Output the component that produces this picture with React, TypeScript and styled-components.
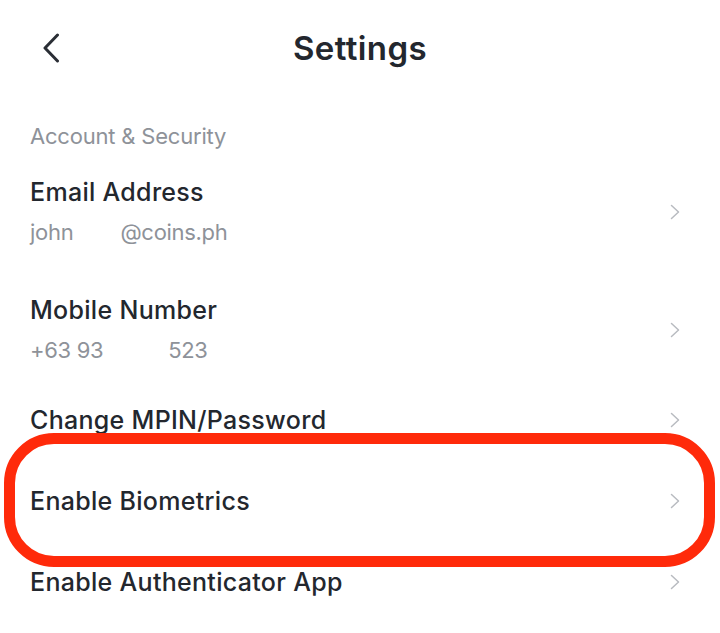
import React from 'react'
import styled, { createGlobalStyle } from 'styled-components'

const GlobalStyle = createGlobalStyle`
  html, body {
    margin: 0;
    padding: 0;
    background: #ffffff;
  }
  body {
    font-family: Inter, 'Noto Sans', sans-serif;
    color: #23272e;
    -webkit-font-smoothing: antialiased;
  }
`

const Page = styled.div`
  width: 720px;
  min-height: 633px;
  background: #fff;
  overflow: hidden;
`

const Header = styled.header`
  display: grid;
  grid-template-columns: 100px 1fr 100px;
  align-items: center;
  height: 96px;
`

const BackButton = styled.button`
  display: flex;
  align-items: center;
  justify-content: flex-start;
  padding: 0 0 0 42px;
  margin: 0;
  border: 0;
  background: none;
  height: 100%;
  cursor: pointer;
`

const Title = styled.h1`
  margin: 0;
  text-align: center;
  font-size: 33px;
  font-weight: 600;
  letter-spacing: 0.4px;
  color: #23272e;
`

const SectionLabel = styled.div`
  margin-top: 25px;
  padding-left: 30px;
  font-size: 22px;
  line-height: 30px;
  color: #8e9299;
  letter-spacing: -0.2px;
`

const List = styled.div`
  display: flex;
  flex-direction: column;
  margin-top: 3px;
`

// rows with a fixed height are single-line; others size to their two lines
const Row = styled.div<{ $height?: number }>`
  position: relative;
  display: flex;
  align-items: center;
  justify-content: space-between;
  padding: ${p => (p.$height ? '0 40px 0 30px' : '22px 40px 25px 30px')};
  height: ${p => (p.$height ? `${p.$height}px` : 'auto')};
  box-sizing: border-box;
`

const RowText = styled.div`
  display: flex;
  flex-direction: column;
`

const RowTitle = styled.div`
  font-size: 25px;
  line-height: 32px;
  font-weight: 500;
  letter-spacing: 0.3px;
  color: #23272e;
`

const RowSub = styled.div`
  margin-top: 9px;
  font-size: 22px;
  line-height: 30px;
  color: #8e9299;
  letter-spacing: -0.3px;
  white-space: pre;
`

const Highlight = styled.div`
  position: absolute;
  top: -17px;
  left: 4px;
  right: 5px;
  bottom: -15px;
  border: 11px solid #ff2a0a;
  border-radius: 50px;
  pointer-events: none;
`

const ChevronLeft = () => (
  <svg width="18" height="30" viewBox="0 0 18 30" fill="none">
    <path d="M15.5 2 L3 15 L15.5 28" stroke="#2a2e35" strokeWidth="3" strokeLinecap="round" strokeLinejoin="round" />
  </svg>
)

const ChevronRight = () => (
  <svg width="10" height="16" viewBox="0 0 10 16" fill="none">
    <path d="M1.5 1.5 L8.5 8 L1.5 14.5" stroke="#b8bbc0" strokeWidth="1.5" strokeLinecap="round" strokeLinejoin="round" />
  </svg>
)

type Item = {
  title: string
  sub?: string
  height?: number
  highlight?: boolean
}

const items: Item[] = [
  { title: 'Email Address', sub: 'john        @coins.ph' },
  { title: 'Mobile Number', sub: '+63 93           523' },
  { title: 'Change MPIN/Password', height: 60 },
  { title: 'Enable Biometrics', height: 102, highlight: true },
  { title: 'Enable Authenticator App', height: 60 },
]

export default function App() {
  return (
    <Page>
      <GlobalStyle />
      <Header>
        <BackButton aria-label="Back">
          <ChevronLeft />
        </BackButton>
        <Title>Settings</Title>
        <div />
      </Header>
      <SectionLabel>Account &amp; Security</SectionLabel>
      <List>
        {items.map(item => (
          <Row key={item.title} $height={item.height}>
            <RowText>
              <RowTitle>{item.title}</RowTitle>
              {item.sub && <RowSub>{item.sub}</RowSub>}
            </RowText>
            <ChevronRight />
            {item.highlight && <Highlight />}
          </Row>
        ))}
      </List>
    </Page>
  )
}
